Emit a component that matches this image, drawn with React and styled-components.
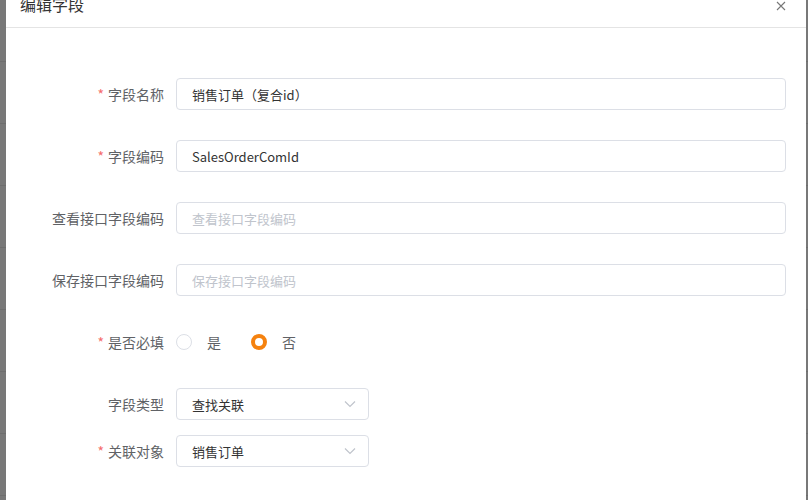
import React, { useState } from "react";
import styled, { createGlobalStyle } from "styled-components";

const GlobalStyle = createGlobalStyle`
  html, body {
    margin: 0;
    padding: 0;
    height: 100%;
    overflow: hidden;
    background: #777777;
    font-family: "Noto Sans CJK SC", "Noto Sans", sans-serif;
  }
`;

const Page = styled.div`
  display: flex;
  height: 500px;
  padding-left: 6px;
  background: repeating-linear-gradient(
    to bottom,
    #787878 0px,
    #787878 61px,
    #6e6e6e 61px,
    #6e6e6e 62px
  );
`;

const Dialog = styled.div`
  width: 800px;
  margin-top: -13px;
  background: #fff;
  display: flex;
  flex-direction: column;
`;

const Header = styled.div`
  display: flex;
  align-items: center;
  justify-content: space-between;
  height: 41px;
  padding: 0 20px 0 14px;
  border-bottom: 1px solid #e4e4e4;
  box-sizing: border-box;
`;

const Title = styled.div`
  font-size: 16px;
  color: #333;
  margin-top: -7px;
`;

const Close = styled.button`
  border: none;
  background: none;
  padding: 0;
  color: #888;
  display: flex;
  margin-top: -3px;
  cursor: pointer;
`;

const Body = styled.div`
  padding: 50px 20px 0 0;
  display: flex;
  flex-direction: column;
`;

const Row = styled.div`
  display: grid;
  grid-template-columns: 170px 1fr;
  align-items: center;
  height: 32px;
  margin-bottom: ${(p) => p.$gap}px;
`;

const Label = styled.label`
  text-align: right;
  padding-right: 12px;
  font-size: 14px;
  color: #606266;
  white-space: nowrap;
`;

const Star = styled.span`
  color: #f56c6c;
  margin-right: 4px;
`;

const Input = styled.input`
  box-sizing: border-box;
  height: 32px;
  width: 100%;
  border: 1px solid #dcdfe6;
  border-radius: 4px;
  padding: 0 15px;
  font-family: inherit;
  font-size: 13px;
  color: #333;
  outline: none;
  &::placeholder {
    color: #c0c4cc;
  }
`;

const SelectBox = styled.div`
  width: 193px;
  height: 32px;
  box-sizing: border-box;
  border: 1px solid #dcdfe6;
  border-radius: 4px;
  display: flex;
  align-items: center;
  justify-content: space-between;
  padding: 0 12px 0 15px;
  font-size: 13px;
  color: #333;
`;

const Radios = styled.div`
  display: flex;
  align-items: center;
  gap: 30px;
`;

const RadioItem = styled.div`
  display: flex;
  align-items: center;
  gap: 15px;
  font-size: 14px;
  color: #606266;
  cursor: pointer;
`;

const Dot = styled.span`
  width: 16px;
  height: 16px;
  box-sizing: border-box;
  border-radius: 50%;
  border: ${(p) => (p.$on ? "4px solid #f5820f" : "1px solid #dcdfe6")};
  background: #fff;
`;

const Chevron = () => (
  <svg width="12" height="8" viewBox="0 0 12 8">
    <path d="M1 1.5 L6 6.5 L11 1.5" fill="none" stroke="#c0c4cc" strokeWidth="1.2" />
  </svg>
);

export default function App() {
  const [name, setName] = useState("销售订单（复合id）");
  const [code, setCode] = useState("SalesOrderComId");
  const [required, setRequired] = useState(false);

  return (
    <>
      <GlobalStyle />
      <Page>
        <Dialog>
          <Header>
            <Title>编辑字段</Title>
            <Close aria-label="close">
              <svg width="10" height="10" viewBox="0 0 10 10">
                <path d="M1 1 L9 9 M9 1 L1 9" stroke="#777" strokeWidth="1.1" />
              </svg>
            </Close>
          </Header>
          <Body>
            <Row $gap={30}>
              <Label><Star>*</Star>字段名称</Label>
              <Input value={name} onChange={(e) => setName(e.target.value)} />
            </Row>
            <Row $gap={30}>
              <Label><Star>*</Star>字段编码</Label>
              <Input value={code} onChange={(e) => setCode(e.target.value)} />
            </Row>
            <Row $gap={30}>
              <Label>查看接口字段编码</Label>
              <Input placeholder="查看接口字段编码" />
            </Row>
            <Row $gap={30}>
              <Label>保存接口字段编码</Label>
              <Input placeholder="保存接口字段编码" />
            </Row>
            <Row $gap={30}>
              <Label><Star>*</Star>是否必填</Label>
              <Radios>
                <RadioItem onClick={() => setRequired(true)}>
                  <Dot $on={required} />是
                </RadioItem>
                <RadioItem onClick={() => setRequired(false)}>
                  <Dot $on={!required} />否
                </RadioItem>
              </Radios>
            </Row>
            <Row $gap={15}>
              <Label>字段类型</Label>
              <SelectBox>
                查找关联
                <Chevron />
              </SelectBox>
            </Row>
            <Row $gap={0}>
              <Label><Star>*</Star>关联对象</Label>
              <SelectBox>
                销售订单
                <Chevron />
              </SelectBox>
            </Row>
          </Body>
        </Dialog>
      </Page>
    </>
  );
}
